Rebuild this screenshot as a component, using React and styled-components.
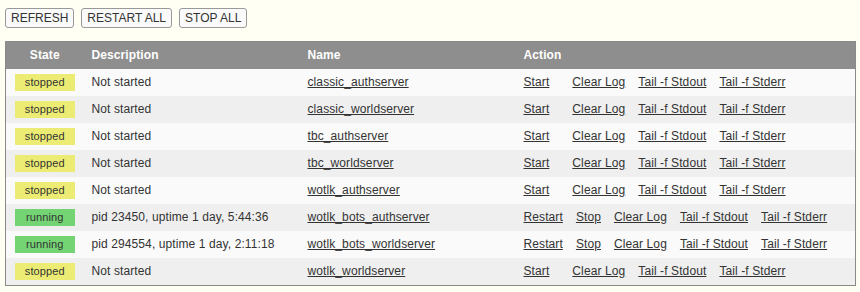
import React from "react";
import styled, { createGlobalStyle } from "styled-components";

const Global = createGlobalStyle`
  html, body { margin: 0; padding: 0; background: #fffff4; }
  body { font-family: "Liberation Sans", Arial, sans-serif; font-size: 12px; color: #333; letter-spacing: 0.1px; }
`;

const Page = styled.div`
  padding: 8px 4px 0 5px;
`;

const Toolbar = styled.div`
  display: flex;
  gap: 7px;
  margin-bottom: 13px;
`;

const Button = styled.button`
  box-sizing: border-box;
  font-family: "Liberation Sans", Arial, sans-serif;
  font-size: 12px;
  letter-spacing: 0;
  color: #333;
  background: #fafafa;
  border: 1px solid #999;
  border-radius: 3px;
  height: 20px;
  padding: 0 5px;
  line-height: 18px;
  cursor: pointer;
`;

const Table = styled.table`
  width: 100%;
  border-collapse: collapse;
  border: 1px solid #8a8a8a;
  table-layout: fixed;
`;

const Th = styled.th`
  box-sizing: border-box;
  background: #8e8e8e;
  color: #fff;
  font-weight: bold;
  text-align: ${(p) => (p.$center ? "center" : "left")};
  height: 27px;
  padding: 0 0 0 ${(p) => (p.$center ? "0" : "8px")};
  width: ${(p) => p.$w || "auto"};
`;

const Row = styled.tr`
  background: ${(p) => (p.$alt ? "#efefef" : "#fafafa")};
`;

const Td = styled.td`
  height: 27px;
  padding: 0 0 0 ${(p) => (p.$center ? "0" : "8px")};
  text-align: ${(p) => (p.$center ? "center" : "left")};
  white-space: nowrap;
`;

const Badge = styled.span`
  display: inline-block;
  width: 60px;
  height: 17px;
  line-height: 17px;
  font-size: 11px;
  text-align: center;
  color: #333;
  background: ${(p) => (p.$running ? "#74d474" : "#ecec74")};
`;

const Link = styled.a`
  color: #333;
  text-decoration: underline;
  margin-right: ${(p) => (p.$wide ? "23px" : "13px")};
  cursor: pointer;
`;

const rows = [
  ["stopped", "Not started", "classic_authserver"],
  ["stopped", "Not started", "classic_worldserver"],
  ["stopped", "Not started", "tbc_authserver"],
  ["stopped", "Not started", "tbc_worldserver"],
  ["stopped", "Not started", "wotlk_authserver"],
  ["running", "pid 23450, uptime 1 day, 5:44:36", "wotlk_bots_authserver"],
  ["running", "pid 294554, uptime 1 day, 2:11:18", "wotlk_bots_worldserver"],
  ["stopped", "Not started", "wotlk_worldserver"],
];

export default function App() {
  return (
    <Page>
      <Global />
      <Toolbar>
        <Button>REFRESH</Button>
        <Button>RESTART ALL</Button>
        <Button>STOP ALL</Button>
      </Toolbar>
      <Table>
        <thead>
          <tr>
            <Th $center $w="78px">State</Th>
            <Th $w="216px">Description</Th>
            <Th $w="216px">Name</Th>
            <Th>Action</Th>
          </tr>
        </thead>
        <tbody>
          {rows.map(([state, desc, name], i) => {
            const running = state === "running";
            return (
              <Row key={name} $alt={i % 2 === 1}>
                <Td $center>
                  <Badge $running={running}>{state}</Badge>
                </Td>
                <Td>{desc}</Td>
                <Td>
                  <Link>{name}</Link>
                </Td>
                <Td>
                  {running ? (
                    <>
                      <Link>Restart</Link>
                      <Link>Stop</Link>
                    </>
                  ) : (
                    <Link $wide>Start</Link>
                  )}
                  <Link>Clear Log</Link>
                  <Link>Tail -f Stdout</Link>
                  <Link>Tail -f Stderr</Link>
                </Td>
              </Row>
            );
          })}
        </tbody>
      </Table>
    </Page>
  );
}
